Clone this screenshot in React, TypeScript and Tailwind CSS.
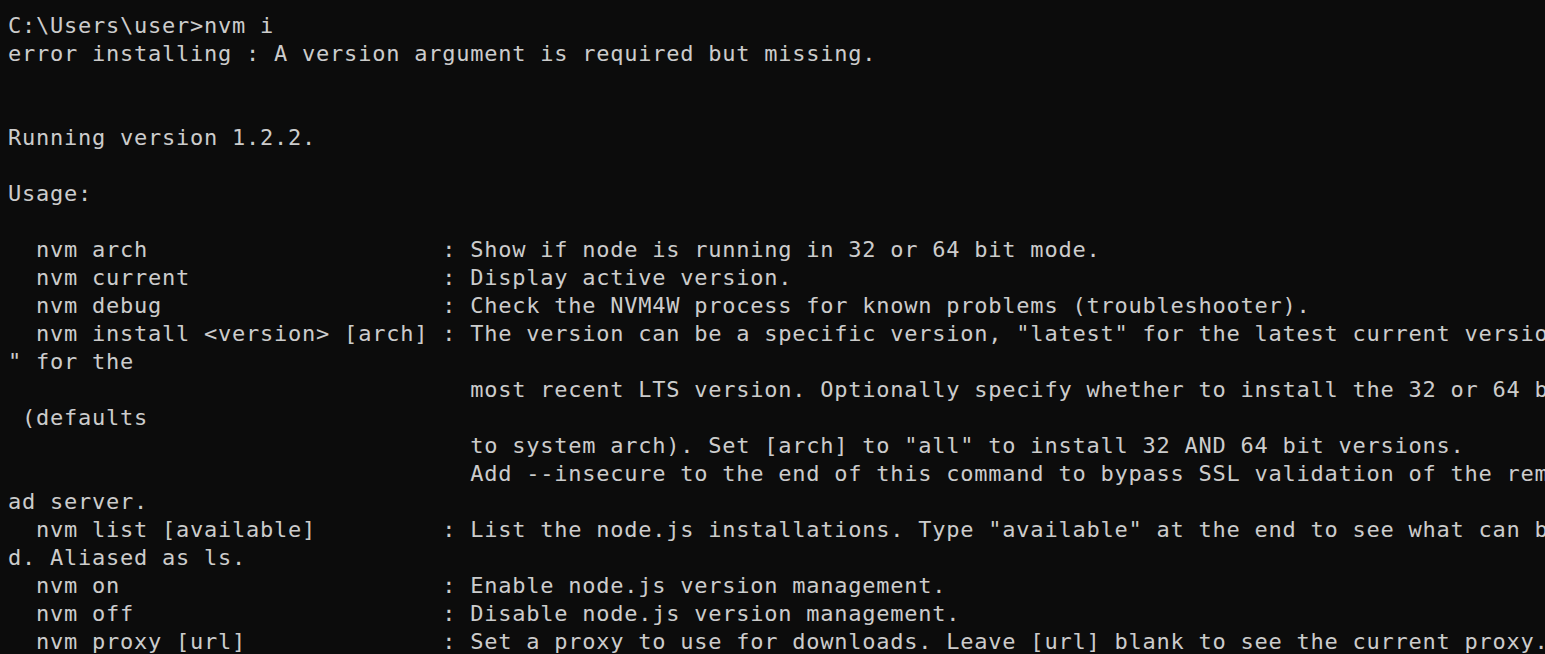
import React from "react";

const lines: string[] = [
  "C:\\Users\\user>nvm i",
  "error installing : A version argument is required but missing.",
  "",
  "",
  "Running version 1.2.2.",
  "",
  "Usage:",
  "",
  "  nvm arch                     : Show if node is running in 32 or 64 bit mode.",
  "  nvm current                  : Display active version.",
  "  nvm debug                    : Check the NVM4W process for known problems (troubleshooter).",
  '  nvm install <version> [arch] : The version can be a specific version, "latest" for the latest current version, or "lts',
  '" for the',
  "                                 most recent LTS version. Optionally specify whether to install the 32 or 64 bit version",
  " (defaults",
  '                                 to system arch). Set [arch] to "all" to install 32 AND 64 bit versions.',
  "                                 Add --insecure to the end of this command to bypass SSL validation of the remote downlo",
  "ad server.",
  '  nvm list [available]         : List the node.js installations. Type "available" at the end to see what can be installe',
  "d. Aliased as ls.",
  "  nvm on                       : Enable node.js version management.",
  "  nvm off                      : Disable node.js version management.",
  "  nvm proxy [url]              : Set a proxy to use for downloads. Leave [url] blank to see the current proxy.",
];

export default function App() {
  return (
    <div className="w-[1545px] h-[654px] overflow-hidden bg-[#0c0c0c] text-[#cccccc] pl-2 pt-[12px] font-['DejaVu_Sans_Mono',monospace] text-[22px] leading-[28px] tracking-[0.76px]">
      {lines.map((l, i) => (
        <div key={i} className="whitespace-pre h-[28px]">
          {l}
        </div>
      ))}
    </div>
  );
}
